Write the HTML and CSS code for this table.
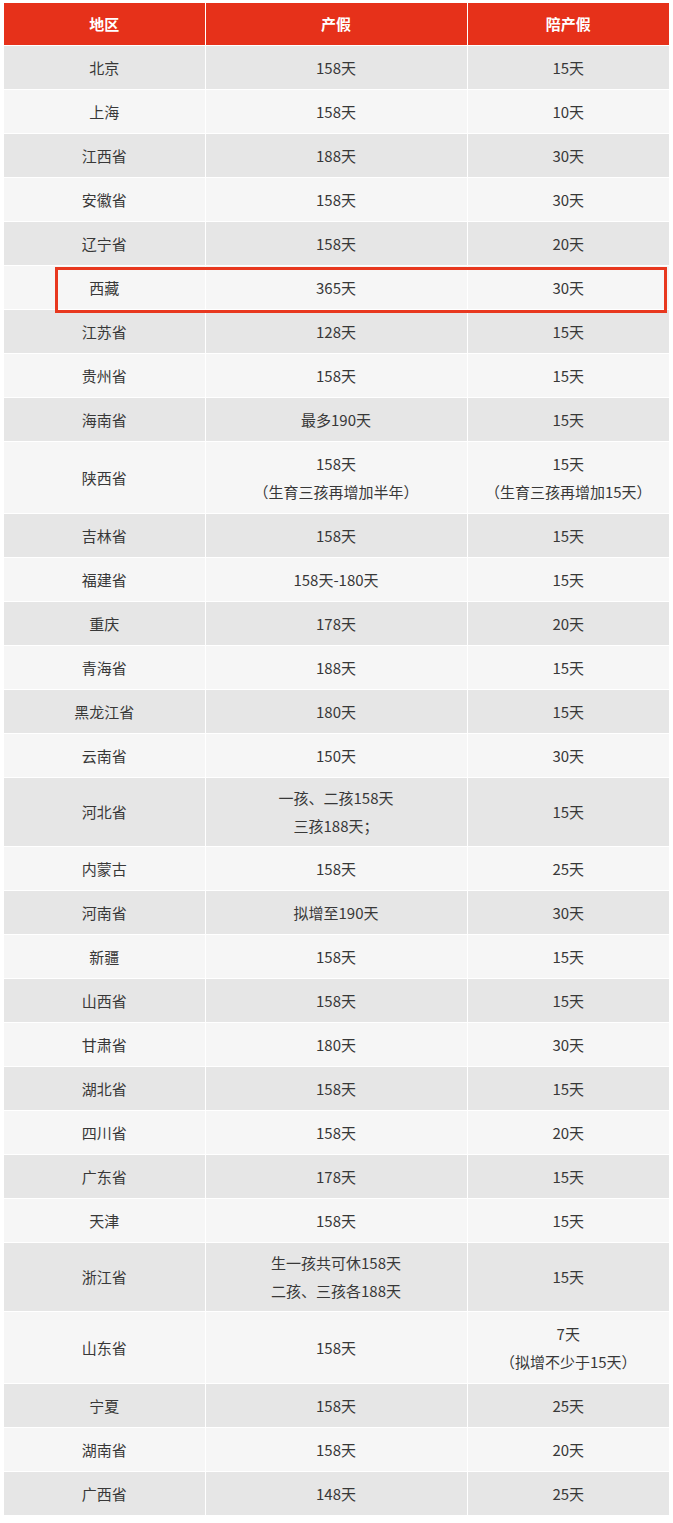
FILE: index.html
```html
<!DOCTYPE html>
<html lang="zh">
<head>
<meta charset="utf-8">
<link rel="stylesheet" href="styles.css">
</head>
<body>
<div class="wrap">
<table class="tbl">
<colgroup><col class="c1"><col class="c2"><col class="c3"></colgroup>
<thead><tr><th>地区</th><th>产假</th><th>陪产假</th></tr></thead>
<tbody>
<tr><td>北京</td><td>158天</td><td>15天</td></tr>
<tr><td>上海</td><td>158天</td><td>10天</td></tr>
<tr><td>江西省</td><td>188天</td><td>30天</td></tr>
<tr><td>安徽省</td><td>158天</td><td>30天</td></tr>
<tr><td>辽宁省</td><td>158天</td><td>20天</td></tr>
<tr><td>西藏</td><td>365天</td><td>30天</td></tr>
<tr><td>江苏省</td><td>128天</td><td>15天</td></tr>
<tr><td>贵州省</td><td>158天</td><td>15天</td></tr>
<tr><td>海南省</td><td>最多190天</td><td>15天</td></tr>
<tr class="tall"><td>陕西省</td><td><p>158天</p><p>（生育三孩再增加半年）</p></td><td><p>15天</p><p>（生育三孩再增加15天）</p></td></tr>
<tr><td>吉林省</td><td>158天</td><td>15天</td></tr>
<tr><td>福建省</td><td>158天-180天</td><td>15天</td></tr>
<tr><td>重庆</td><td>178天</td><td>20天</td></tr>
<tr><td>青海省</td><td>188天</td><td>15天</td></tr>
<tr><td>黑龙江省</td><td>180天</td><td>15天</td></tr>
<tr><td>云南省</td><td>150天</td><td>30天</td></tr>
<tr class="mid"><td>河北省</td><td><p>一孩、二孩158天</p><p>三孩188天；</p></td><td>15天</td></tr>
<tr><td>内蒙古</td><td>158天</td><td>25天</td></tr>
<tr><td>河南省</td><td>拟增至190天</td><td>30天</td></tr>
<tr><td>新疆</td><td>158天</td><td>15天</td></tr>
<tr><td>山西省</td><td>158天</td><td>15天</td></tr>
<tr><td>甘肃省</td><td>180天</td><td>30天</td></tr>
<tr><td>湖北省</td><td>158天</td><td>15天</td></tr>
<tr><td>四川省</td><td>158天</td><td>20天</td></tr>
<tr><td>广东省</td><td>178天</td><td>15天</td></tr>
<tr><td>天津</td><td>158天</td><td>15天</td></tr>
<tr class="mid"><td>浙江省</td><td><p>生一孩共可休158天</p><p>二孩、三孩各188天</p></td><td>15天</td></tr>
<tr class="tall"><td>山东省</td><td>158天</td><td><p>7天</p><p>（拟增不少于15天）</p></td></tr>
<tr><td>宁夏</td><td>158天</td><td>25天</td></tr>
<tr><td>湖南省</td><td>158天</td><td>20天</td></tr>
<tr><td>广西省</td><td>148天</td><td>25天</td></tr>
</tbody>
</table>
<div class="highlight"></div>
</div>
</body>
</html>
```
FILE: styles.css
```css
html, body {
  margin: 0;
  padding: 0;
  background: #ffffff;
}
body {
  font-family: "Noto Sans CJK SC", "Microsoft YaHei", sans-serif;
  color: #383838;
}
.wrap {
  position: relative;
  padding: 3px 4px 0 4px;
  width: 665px;
}
.tbl {
  width: 665px;
  border-collapse: collapse;
  table-layout: fixed;
}
.c1 { width: 201px; }
.c2 { width: 262px; }
.c3 { width: 202px; }
.tbl th, .tbl td {
  text-align: center;
  vertical-align: middle;
  padding: 0;
  border: 1px solid #ffffff;
  font-size: 15px;
  line-height: 20px;
}
.tbl thead th { border-top: none; }
.tbl th:first-child, .tbl td:first-child { border-left: none; }
.tbl th:last-child, .tbl td:last-child { border-right: none; }
.tbl th {
  background: #e6311a;
  color: #ffffff;
  font-weight: bold;
  height: 42px;
}
.tbl td { height: 43px; }
.tbl tbody tr:nth-child(odd) td { background: #e6e6e6; }
.tbl tbody tr:nth-child(even) td { background: #f6f6f6; }
.tbl tr.tall td { height: 71px; }
.tbl tr.mid td { height: 68px; }
.tbl p { margin: 0; line-height: 28px; }
.highlight {
  position: absolute;
  left: 55px;
  top: 267px;
  width: 606px;
  height: 40px;
  border: 3px solid #e8381f;
}
```
